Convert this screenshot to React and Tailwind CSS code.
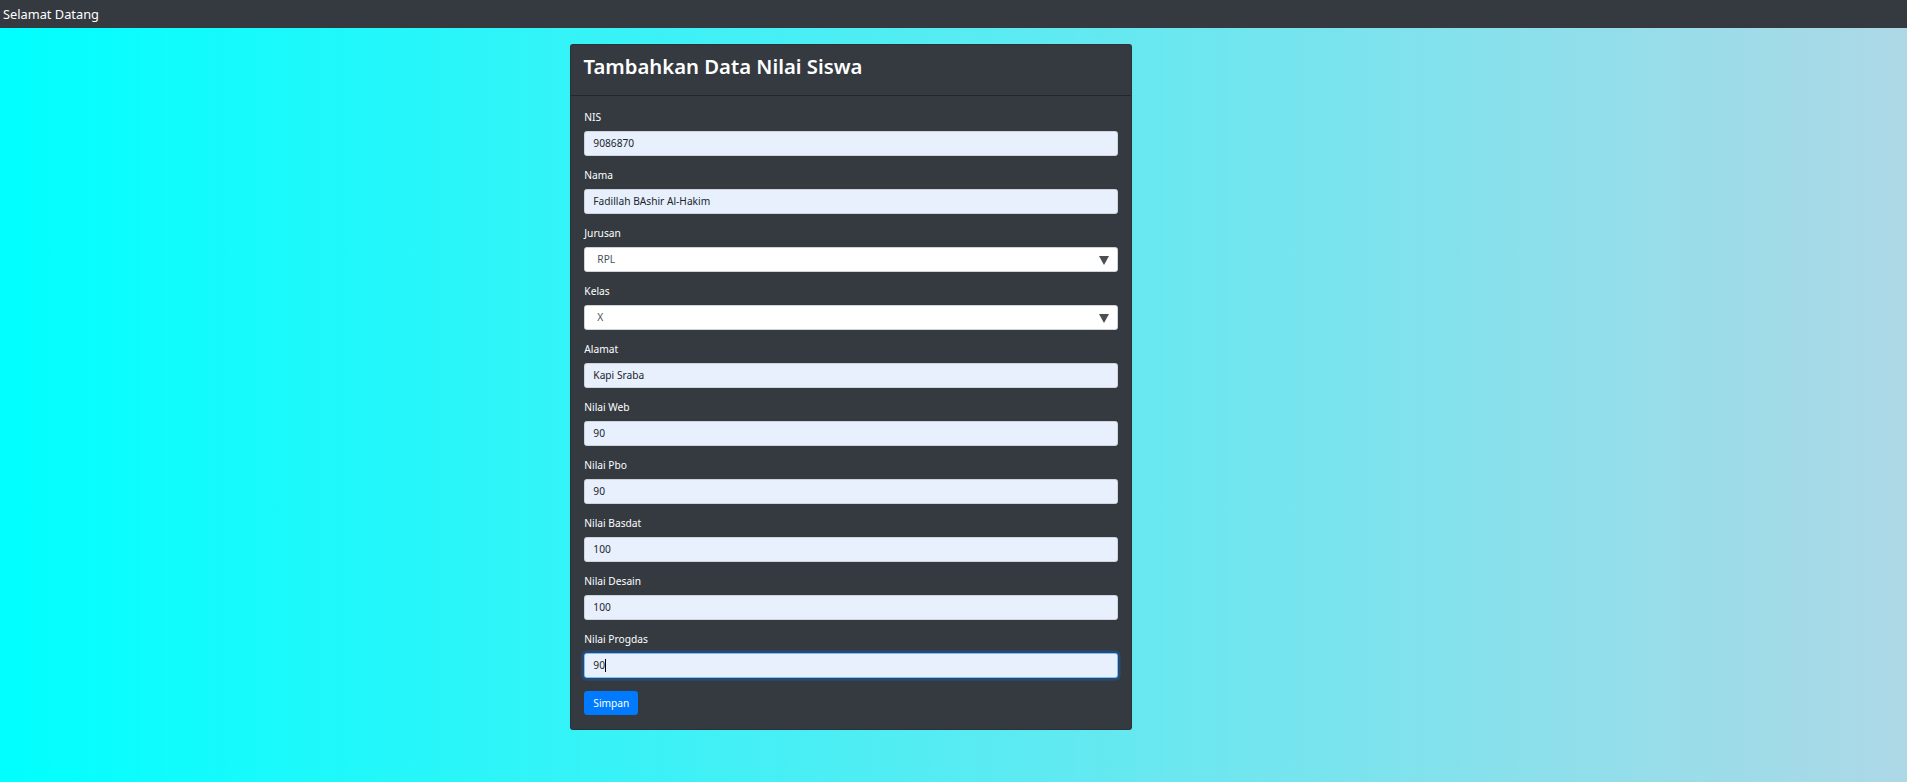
import React from "react"

const fields = [
  { label: "NIS", value: "9086870" },
  { label: "Nama", value: "Fadillah BAshir Al-Hakim" },
  { label: "Jurusan", value: "RPL", select: true },
  { label: "Kelas", value: "X", select: true },
  { label: "Alamat", value: "Kapi Sraba" },
  { label: "Nilai Web", value: "90" },
  { label: "Nilai Pbo", value: "90" },
  { label: "Nilai Basdat", value: "100" },
  { label: "Nilai Desain", value: "100" },
  { label: "Nilai Progdas", value: "90", focused: true },
]

function Field({ label, value, select, focused }) {
  return (
    <div className="mb-[11.33px]">
      <div className="mb-[5.33px] text-[10.2px] leading-[16px] text-white">
        {label}
      </div>

      {select ? (
        <div className="relative flex h-[25.33px] items-center rounded-[2.67px] border border-[#ced4da] bg-white pl-[12px] text-[10.2px] text-[#495057]">
          {value}
          <svg
            className="absolute right-[8px] top-[8px]"
            width="10"
            height="9"
            viewBox="0 0 10 9"
          >
            <path d="M0 0 H10 L5 9 Z" fill="#4b4f54" />
          </svg>
        </div>
      ) : (
        <div
          className={
            focused
              ? "flex h-[25.33px] items-center rounded-[2.67px] border border-[#80bdff] bg-[#e8f0fe] pl-[8px] text-[10.2px] text-[#212529] shadow-[0_0_0_2.67px_rgba(0,123,255,0.25)]"
              : "flex h-[25.33px] items-center rounded-[2.67px] border border-[#ced4da] bg-[#e8f0fe] pl-[8px] text-[10.2px] text-[#212529]"
          }
        >
          {value}
          {focused && <span className="ml-[0.5px] h-[13px] w-px bg-black" />}
        </div>
      )}
    </div>
  )
}

export default function App() {
  return (
    <div
      className="min-h-[782px] bg-linear-to-r/srgb from-[#00ffff] to-[#add8e6]"
      style={{ fontFamily: '"Noto Sans", "Open Sans", sans-serif' }}
    >
      {/* navbar */}
      <nav className="flex h-[28px] items-center bg-[#343a40] pl-[3px]">
        <span className="text-[12.8px] leading-[18px] text-white">
          Selamat Datang
        </span>
      </nav>

      {/* card */}
      <div className="ml-[570px] mt-[16px] w-[562px] rounded-[3px] border border-black/15 bg-[#343a40]">
        <div className="h-[51px] border-b border-black/30 px-[12.5px] pt-[8px]">
          <h2 className="text-[20.3px] font-semibold leading-[26px] text-white">
            Tambahkan Data Nilai Siswa
          </h2>
        </div>

        <div className="px-[13.33px] pb-[13.33px] pt-[13.33px]">
          {fields.map((f) => (
            <Field key={f.label} {...f} />
          ))}

          <button className="h-[24px] rounded-[2.67px] border border-[#007bff] bg-[#007bff] px-[8px] text-[10.2px] leading-[16px] text-white">
            Simpan
          </button>
        </div>
      </div>
    </div>
  )
}
